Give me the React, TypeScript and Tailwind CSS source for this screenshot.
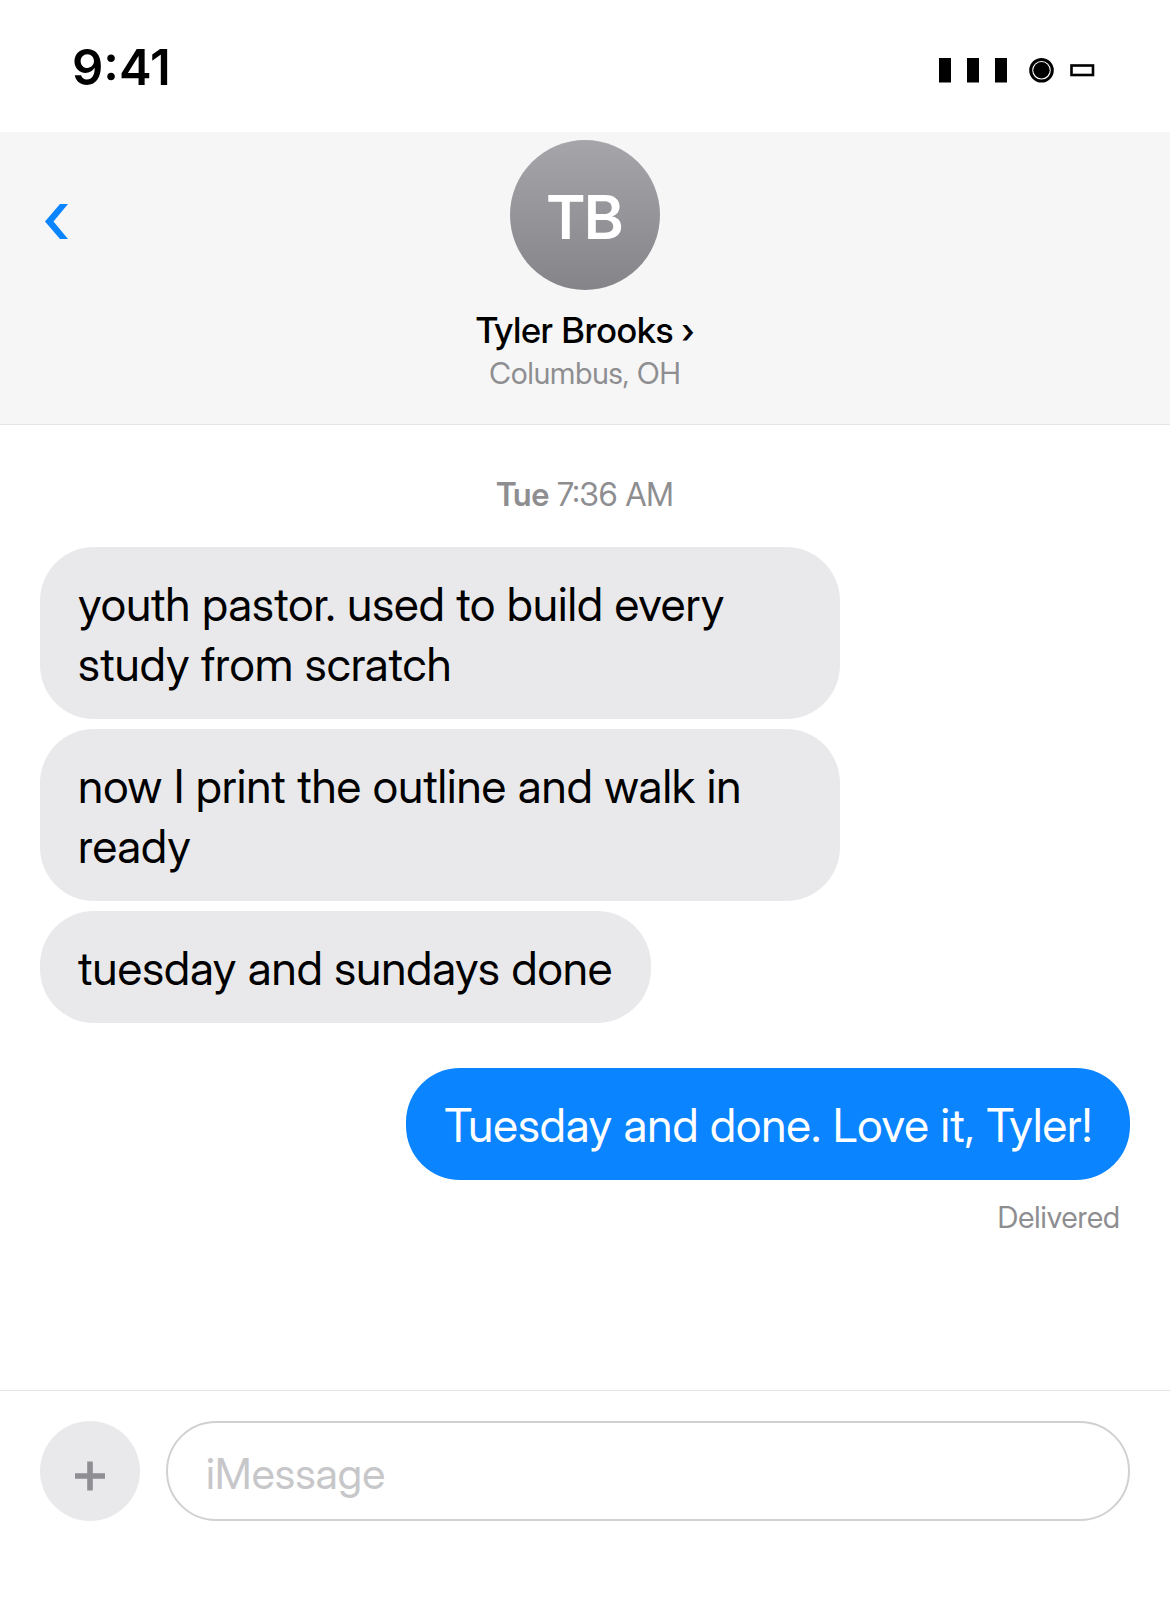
import React from 'react';

interface Message {
  id: number;
  text: string;
  sent?: boolean;
}

const messages: Message[] = [
  { id: 1, text: 'youth pastor. used to build every study from scratch' },
  { id: 2, text: 'now I print the outline and walk in ready' },
  { id: 3, text: 'tuesday and sundays done' },
  { id: 4, text: 'Tuesday and done. Love it, Tyler!', sent: true },
];

const StatusBar: React.FC = () => (
  <div className="flex h-[132px] items-center justify-between px-[72px] pt-1">
    <span className="font-['Inter',sans-serif] text-[49px] font-semibold leading-[60px]">9:41</span>
    <svg viewBox="0 0 160 30" className="mr-[2px] mt-1 h-[30px] w-[160px]" aria-label="Signal, Wi-Fi and battery">
      <rect x="3" y="3" width="12" height="24.5" />
      <rect x="31" y="3" width="12" height="24.5" />
      <rect x="59" y="3" width="12" height="24.5" />
      <circle cx="105.5" cy="15.3" r="10.8" fill="none" stroke="black" strokeWidth="3" />
      <circle cx="105.5" cy="15.3" r="8.2" />
      <rect x="135.5" y="10.5" width="21.5" height="9.5" fill="none" stroke="black" strokeWidth="2.6" />
    </svg>
  </div>
);

const ChatHeader: React.FC = () => (
  <header className="relative flex flex-col items-center border-b border-[#e5e5e7] bg-[#f6f6f7] pt-2 pb-8">
    <button className="absolute top-[71px] left-[44px]" aria-label="Back">
      <svg viewBox="0 0 26 38" className="h-[38px] w-[26px]">
        <path d="M16 1h8L9.5 18.5 24 36h-8L1 18.5z" fill="#0a84ff" />
      </svg>
    </button>
    <div className="flex size-[150px] items-center justify-center rounded-full bg-linear-to-b from-[#a5a5aa] to-[#858589] pt-1 text-[60px] font-semibold text-white">
      TB
    </div>
    <h1 className="mt-4 text-[36px] font-medium leading-[48px]">Tyler Brooks ›</h1>
    <p className="text-[30px] leading-[38px] text-[#8e8e91]">Columbus, OH</p>
  </header>
);

const Bubble: React.FC<{ message: Message }> = ({ message }) => (
  <div
    className={
      message.sent
        ? 'mt-[35px] max-w-[800px] self-end rounded-[54px] bg-[#0a84ff] px-[38px] pt-[27px] pb-[25px] text-white'
        : 'max-w-[800px] self-start rounded-[54px] bg-[#e9e9eb] px-[38px] pt-[27px] pb-[25px]'
    }
  >
    {message.text}
  </div>
);

export default function App() {
  return (
    <div className="flex min-h-screen flex-col bg-white font-['Inter_Display','Inter',sans-serif] text-black">
      <StatusBar />
      <ChatHeader />
      <main className="flex flex-1 flex-col px-10 pt-[50px]">
        <p className="mb-8 text-center text-[32px] leading-[40px] text-[#8e8e91]">
          <span className="font-semibold">Tue</span> 7:36 AM
        </p>
        <div className="flex flex-col gap-[10px] text-[46px] leading-[60px]">
          {messages.map((message) => (
            <Bubble key={message.id} message={message} />
          ))}
        </div>
        <p className="mt-[18px] pr-[10px] text-right text-[30px] leading-[38px] text-[#8e8e91]">Delivered</p>
      </main>
      <footer className="flex items-center gap-[26px] border-t border-[#e5e5e7] px-10 pt-[30px] pb-[79px]">
        <button
          aria-label="Add attachment"
          className="flex size-[100px] shrink-0 items-center justify-center rounded-full bg-[#e9e9eb] text-[#8e8e93]"
        >
          <svg viewBox="0 0 32 32" className="mt-2 size-8">
            <path d="M16 2.5v29M1 17h30" stroke="currentColor" strokeWidth="5.6" />
          </svg>
        </button>
        <input
          type="text"
          aria-label="Message"
          placeholder="iMessage"
          className="h-[100px] min-w-0 flex-1 rounded-full border-2 border-[#d1d1d3] px-[38px] pt-1 text-[43px] placeholder:text-[#c7c7ca]"
        />
      </footer>
    </div>
  );
}
